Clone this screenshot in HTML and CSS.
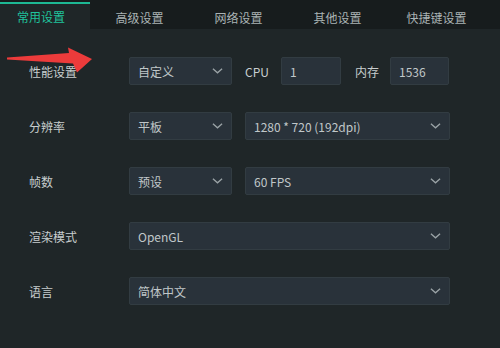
FILE: index.html
```html
<!DOCTYPE html>
<html lang="zh-CN">
<head>
<meta charset="utf-8">
<link rel="stylesheet" href="styles.css">
</head>
<body>
<div class="app">
  <div class="tabs">
    <div class="tab active">常用设置</div>
    <div class="tab">高级设置</div>
    <div class="tab">网络设置</div>
    <div class="tab">其他设置</div>
    <div class="tab">快捷键设置</div>
  </div>
  <div class="form">
    <div class="row">
      <div class="label">性能设置</div>
      <div class="field sel w-short"><span>自定义</span><svg class="chev" viewBox="0 0 12 8"><path d="M1 1.5 L6 6 L11 1.5"/></svg></div>
      <div class="sublabel">CPU</div>
      <div class="field inp"><span>1</span></div>
      <div class="sublabel mem">内存</div>
      <div class="field inp inp2"><span>1536</span></div>
    </div>
    <div class="row">
      <div class="label">分辨率</div>
      <div class="field sel w-short"><span>平板</span><svg class="chev" viewBox="0 0 12 8"><path d="M1 1.5 L6 6 L11 1.5"/></svg></div>
      <div class="field sel w-wide"><span>1280 * 720 (192dpi)</span><svg class="chev" viewBox="0 0 12 8"><path d="M1 1.5 L6 6 L11 1.5"/></svg></div>
    </div>
    <div class="row">
      <div class="label">帧数</div>
      <div class="field sel w-short"><span>预设</span><svg class="chev" viewBox="0 0 12 8"><path d="M1 1.5 L6 6 L11 1.5"/></svg></div>
      <div class="field sel w-wide"><span>60 FPS</span><svg class="chev" viewBox="0 0 12 8"><path d="M1 1.5 L6 6 L11 1.5"/></svg></div>
    </div>
    <div class="row">
      <div class="label">渲染模式</div>
      <div class="field sel w-full"><span>OpenGL</span><svg class="chev" viewBox="0 0 12 8"><path d="M1 1.5 L6 6 L11 1.5"/></svg></div>
    </div>
    <div class="row">
      <div class="label">语言</div>
      <div class="field sel w-full"><span>简体中文</span><svg class="chev" viewBox="0 0 12 8"><path d="M1 1.5 L6 6 L11 1.5"/></svg></div>
    </div>
  </div>
  <svg class="arrow" viewBox="0 0 100 80" width="100" height="80"><polygon points="7,57.5 69,53 68,47.5 92,59 77,72.5 73,63.5 7,59.5"/></svg>
</div>
</body>
</html>
```

FILE: styles.css
```css
html, body {
  margin: 0;
  padding: 0;
  background: #1f2628;
}
body {
  font-family: "Noto Sans CJK SC", "Open Sans", sans-serif;
  font-size: 12px;
  color: #c3c9ca;
}
.app {
  position: relative;
  width: 500px;
  height: 348px;
  overflow: hidden;
  background: #1f2628;
}
.tabs {
  display: flex;
  height: 29px;
  padding-top: 2px;
  box-sizing: border-box;
  background: #171c1d;
}
.tab {
  width: 99px;
  height: 27px;
  padding-top: 7px;
  line-height: 18px;
  text-align: center;
  color: #aab3b4;
  font-size: 12px;
  box-sizing: border-box;
}
.tab.active {
  width: 90px;
  padding-right: 8px;
  padding-top: 4px;
  background: #1f2628;
  border-top: 2px solid #1db894;
  color: #1fc29c;
}
.form {
  display: flex;
  flex-direction: column;
  gap: 27px;
  padding: 28px 0 0 29px;
}
.row {
  display: flex;
  align-items: center;
  height: 28px;
}
.label {
  width: 100px;
  color: #c8cecf;
  font-size: 12px;
}
.field {
  box-sizing: border-box;
  height: 28px;
  background: #29323a;
  border: 1px solid #323c42;
  border-radius: 2px;
  display: flex;
  align-items: center;
  padding: 0 8px 0 8px;
  color: #c0c7c9;
  font-size: 12px;
}
.field span {
  flex: 1;
}
.sel.w-short { width: 103px; }
.sel.w-wide { width: 205px; margin-left: 13px; }
.sel.w-full { width: 321px; }
.inp { width: 60px; }
.inp.inp2 { width: 59px; }
.sublabel {
  margin-left: 13px;
  width: 36px;
  color: #c8cecf;
}
.sublabel.mem { margin-left: 14px; width: 35px; }
.chev {
  width: 11px;
  height: 8px;
  fill: none;
  stroke: #9aa3a6;
  stroke-width: 1.4;
}
.arrow {
  position: absolute;
  left: 0;
  top: 0;
}
.arrow polygon {
  fill: #ec3b3b;
}
```
